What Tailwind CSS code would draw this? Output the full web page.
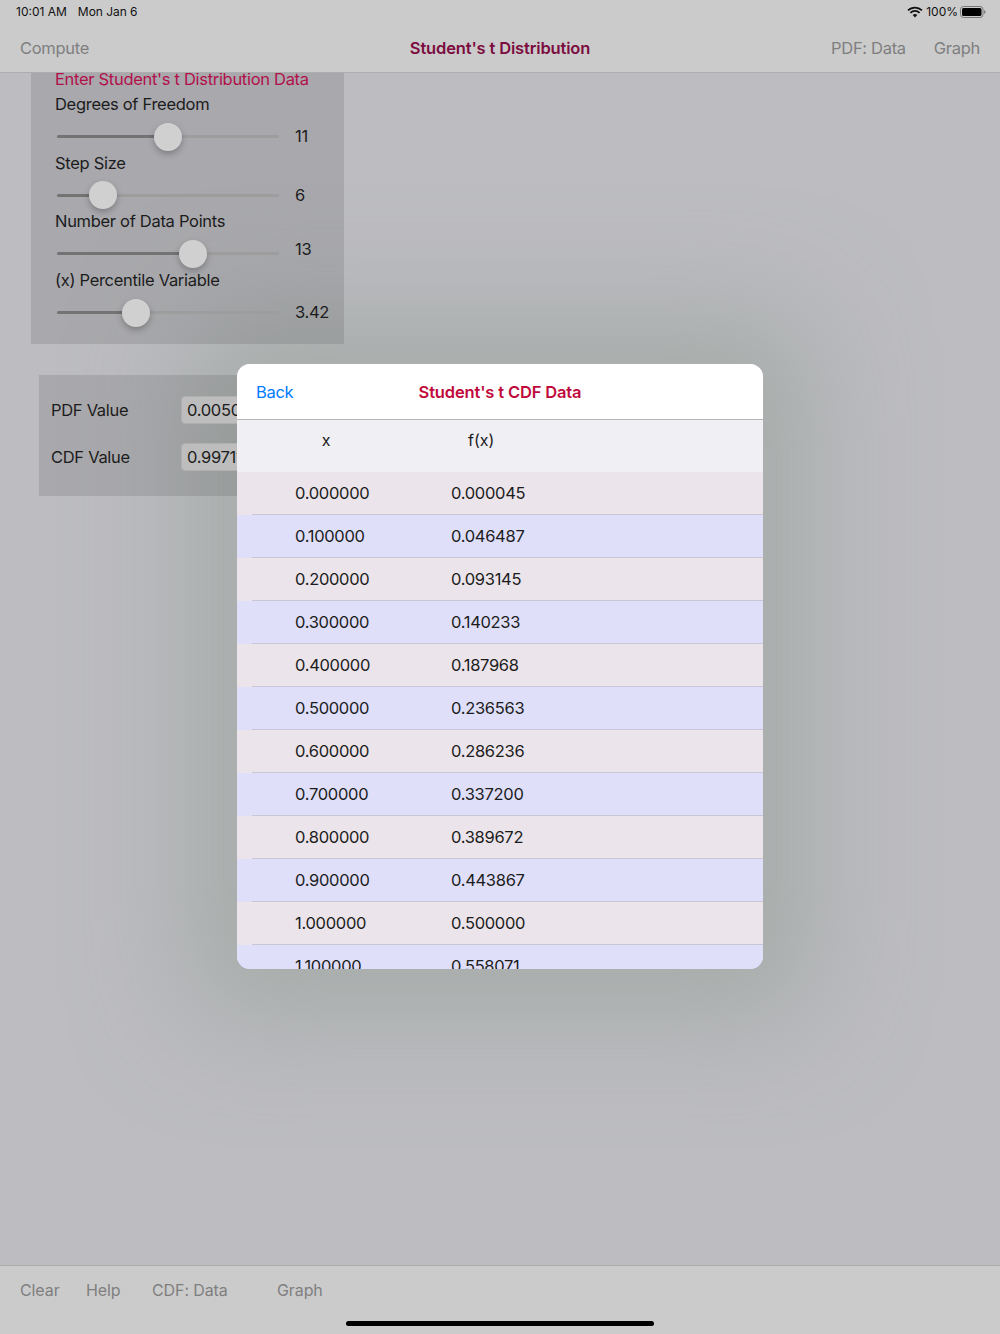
<!DOCTYPE html>
<html lang="en">
<head>
  <meta charset="UTF-8" />
  <meta name="viewport" content="width=device-width, initial-scale=1.0"/>
  <title>Student's t Distribution</title>
  <script src="https://cdn.jsdelivr.net/npm/@tailwindcss/browser@4"></script>
</head>
<body class="bg-[#bcbcc1] font-['Inter',sans-serif] text-[#1c1c1c] overflow-hidden">
  <div class="relative flex flex-col h-[1334px] w-[1000px]">

    <!-- Modal shadow, sits behind the panels -->
    <div class="absolute left-[237px] top-[364px] w-[526px] h-[605px] rounded-[13px] shadow-[0_0_110px_50px_rgba(150,158,150,0.55)]"></div>

    <!-- Top bars -->
    <header class="relative h-[73px] shrink-0 bg-[#cbcbcb] border-b border-[#adadad] z-10">
      <div class="flex justify-between items-center h-6 pl-4 pr-[14px] text-[12px] text-[#111]">
        <div class="flex gap-[11px]"><span>10:01 AM</span><span class="tracking-[-0.05px]">Mon Jan 6</span></div>
        <div class="flex items-center gap-[3px]">
          <svg width="16" height="12" viewBox="0 0 16 12"><path d="M1 4.4a10 10 0 0 1 14 0" fill="none" stroke="#111" stroke-width="1.7"/><path d="M3.4 6.8a6.6 6.6 0 0 1 9.2 0" fill="none" stroke="#111" stroke-width="1.7"/><path d="M5.7 9a3.3 3.3 0 0 1 4.6 0L8 11.4z" fill="#111"/></svg>
          <span>100%</span>
          <svg class="-ml-px" width="26" height="12" viewBox="0 0 26 12"><rect x=".5" y=".5" width="22.5" height="11" rx="3" fill="none" stroke="#777"/><rect x="2" y="2" width="19.5" height="8" rx="1.6" fill="#000"/><path d="M24 4.2c1 .3 1.5 1 1.5 1.8s-.5 1.5-1.5 1.8z" fill="#777"/></svg>
        </div>
      </div>
      <div class="relative flex items-center justify-between h-12 pt-px px-5 text-[16.5px] tracking-[-0.3px] text-[#7f7f7f]">
        <span>Compute</span>
        <div class="flex gap-7"><span>PDF: Data</span><span>Graph</span></div>
        <h1 class="absolute inset-x-0 text-center font-semibold text-[#7b0d40] text-[16.5px] tracking-[-0.15px]">Student's t Distribution</h1>
      </div>
    </header>

    <main class="relative flex-1 pl-[31px] text-[16.5px] tracking-[-0.3px]">
      <!-- Input panel -->
      <section id="sliders" class="w-[313px] h-[271px] bg-black/10 pl-6 pr-2">
        <h2 class="text-[#b3104a] leading-[12px] pb-px">Enter Student's t Distribution Data</h2>
      </section>

      <!-- Results -->
      <section class="w-[300px] h-[121px] mt-[31px] ml-2 bg-black/10 pl-3 pt-[21px] space-y-[19px]">
        <div class="flex items-center h-[28px]"><span class="w-[130px]">PDF Value</span><span class="w-[90px] h-[28px] px-[5px] leading-[26px] rounded bg-[#bdbdbd] border border-[#b0b0b0] overflow-hidden">0.00503</span></div>
        <div class="flex items-center h-[28px]"><span class="w-[130px]">CDF Value</span><span class="w-[90px] h-[28px] px-[5px] leading-[26px] rounded bg-[#bdbdbd] border border-[#b0b0b0] overflow-hidden">0.99711</span></div>
      </section>
    </main>

    <!-- Bottom toolbar -->
    <footer class="relative h-[69px] shrink-0 bg-[#cbcbcb] border-t border-[#adadad] pl-5 pt-3 text-[16px] tracking-[-0.1px] text-[#7f7f7f]">
      <div class="flex">
        <span class="w-[66px]">Clear</span>
        <span class="w-[66px]">Help</span>
        <span class="w-[125px]">CDF: Data</span>
        <span>Graph</span>
      </div>
      <div class="absolute left-[346px] bottom-2 w-[308px] h-[5px] rounded-full bg-black"></div>
    </footer>

    <!-- Modal -->
    <div class="absolute left-[237px] top-[364px] w-[526px] h-[605px] rounded-[13px] overflow-hidden bg-[#dfdffa] z-20 text-[16.5px] tracking-[-0.3px]">
      <div class="relative flex items-center justify-center h-[56px] pt-px bg-white border-b border-[#b5b5b5]">
        <span class="absolute left-[19px] text-[#007aff]">Back</span>
        <h2 class="font-semibold text-[#c00a3c] tracking-[-0.15px]">Student's t CDF Data</h2>
      </div>
      <div class="flex h-[52px] bg-[#efeff4] text-[16px] tracking-normal pt-2">
        <span class="w-[178px] text-center">x</span>
        <span class="ml-[53px]">f(x)</span>
      </div>
      <div id="rows"></div>
    </div>
  </div>

  <script>
    // slider rows: label, value, thumb centre inside the 222px track, value nudge
    const sliders = [
      ['Degrees of Freedom', '11', 111, -0.5],
      ['Step Size', '6', 46, 0],
      ['Number of Data Points', '13', 136, -5],
      ['(x) Percentile Variable', '3.42', 79, -0.5]
    ];
    document.getElementById('sliders').innerHTML += sliders.map(s => `
      <div class="h-[58.7px] pt-[6px]">
        <p class="leading-[24px]">${s[0]}</p>
        <div class="flex items-center h-[16px] mt-[12.5px]">
          <div class="relative w-[222px] h-[3px] ml-[2px] rounded-full bg-[#9d9d9d]">
            <div class="h-[3px] rounded-full bg-[#737373]" style="width: ${s[2]}px"></div>
            <div class="absolute top-[-12.5px] w-[28px] h-[28px] rounded-full bg-[#d0d0d0] shadow-[0_3px_6px_rgba(0,0,0,0.25)]" style="left: ${s[2] - 14}px"></div>
          </div>
          <span class="ml-[16px]" style="margin-top: ${s[3] * 2}px">${s[1]}</span>
        </div>
      </div>`).join('');

    const data = [
      ['0.000000', '0.000045'], ['0.100000', '0.046487'], ['0.200000', '0.093145'],
      ['0.300000', '0.140233'], ['0.400000', '0.187968'], ['0.500000', '0.236563'],
      ['0.600000', '0.286236'], ['0.700000', '0.337200'], ['0.800000', '0.389672'],
      ['0.900000', '0.443867'], ['1.000000', '0.500000'], ['1.100000', '0.558071']
    ];
    document.getElementById('rows').innerHTML = data.map((d, i) => `
      <div class="relative flex items-center h-[43px] pl-[58px] ${i % 2 ? 'bg-[#dfdffa]' : 'bg-[#ebe4ea]'}">
        <span class="w-[156px]">${d[0]}</span><span>${d[1]}</span>
        <div class="absolute left-[15px] right-0 bottom-0 h-px bg-[#c9c6d6]"></div>
      </div>`).join('');
  </script>
</body>
</html>
